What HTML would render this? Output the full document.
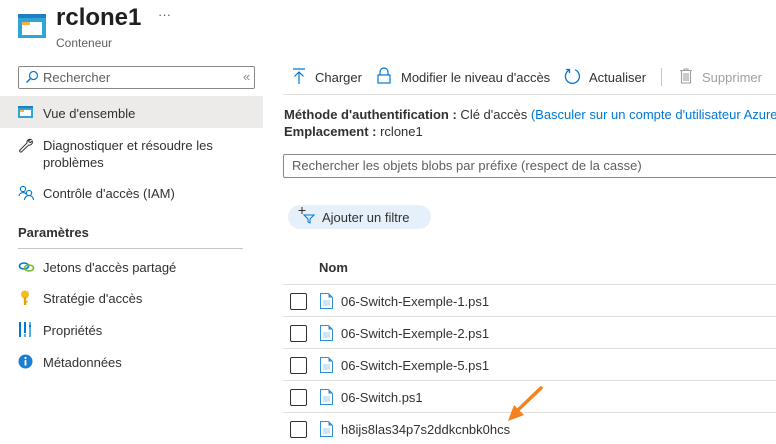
<!DOCTYPE html>
<html><head><meta charset="utf-8"><style>
*{margin:0;padding:0;box-sizing:border-box}
body{width:776px;height:444px;overflow:hidden;background:#fff;font-family:"Segoe UI","Liberation Sans",sans-serif;color:#323130;font-size:13px;position:relative}
.a{position:absolute;white-space:nowrap}
.nav{position:absolute;left:43px;font-size:13px}
.ic{position:absolute}
.row{position:absolute;left:283px;width:493px;height:32px;border-top:1px solid #e1dfdd}
.cb{position:absolute;left:7px;top:8px;width:17px;height:17px;border:1px solid #323130;border-radius:2px}
.fi{position:absolute;left:37px;top:8px}
.fn{position:absolute;left:58px;top:9px;font-size:13px}
</style></head><body>
<svg class="ic" style="left:18px;top:14px" width="28" height="24" viewBox="0 0 28 24"><rect x="0" y="0" width="28" height="24" fill="#2fa6d8"/><rect x="0" y="0" width="28" height="4" fill="#1f7fc0"/><rect x="4" y="8" width="20" height="13" fill="#fff"/><rect x="4" y="8" width="8" height="3" fill="#f0b349"/></svg>
<div class="a" style="left:56px;top:4px;font-size:24px;font-weight:600;color:#201f1e">rclone1</div>
<div class="a" style="left:158px;top:7px;font-size:13px;color:#605e5c">···</div>
<div class="a" style="left:56px;top:36px;font-size:12px;color:#605e5c">Conteneur</div>
<div class="a" style="left:18px;top:66px;width:237px;height:23px;border:1px solid #8a8886;border-radius:2px"></div>
<svg class="ic" style="left:25px;top:70px" width="14" height="14" viewBox="0 0 14 14"><circle cx="8.5" cy="5.5" r="4" fill="none" stroke="#0078d4" stroke-width="1.2"/><path d="M5.5 8.5L1.5 12.5" stroke="#0078d4" stroke-width="1.4"/></svg>
<div class="a" style="left:43px;top:70px;color:#605e5c">Rechercher</div>
<div class="a" style="left:243px;top:69px;color:#8a8886;font-size:13px">«</div>
<div class="a" style="left:0;top:96px;width:263px;height:32px;background:#edebe9"></div>
<svg class="ic" style="left:18px;top:106px" width="15" height="12" viewBox="0 0 15 12"><rect width="15" height="12" fill="#2fa6d8"/><rect width="15" height="2" fill="#1f7fc0"/><rect x="2" y="4" width="11" height="6" fill="#fff"/><rect x="2" y="4" width="4" height="2" fill="#f0b349"/></svg>
<div class="nav" style="top:106px">Vue d'ensemble</div>
<svg class="ic" style="left:18px;top:137px" width="15" height="16" viewBox="0 0 15 16"><path d="M13 2.5a3 3 0 0 0-4 3.5L2 13a1.2 1.2 0 0 0 1.7 1.7L10.7 8a3 3 0 0 0 3.5-4L12.5 5.5 11 5 10.5 3.5z" fill="none" stroke="#323130" stroke-width="1"/></svg>
<div class="nav" style="top:137px;line-height:17px">Diagnostiquer et résoudre les<br>problèmes</div>
<svg class="ic" style="left:18px;top:185px" width="16" height="15" viewBox="0 0 16 15"><circle cx="5" cy="4" r="2.6" fill="none" stroke="#0078d4" stroke-width="1.1"/><path d="M1 11a4 4 0 0 1 7-2" fill="none" stroke="#0078d4" stroke-width="1.1"/><circle cx="11" cy="8" r="2.6" fill="none" stroke="#0078d4" stroke-width="1.1"/><path d="M6.5 15a4.5 4.5 0 0 1 9 0" fill="none" stroke="#0078d4" stroke-width="1.1"/></svg>
<div class="nav" style="top:186px">Contrôle d'accès (IAM)</div>
<div class="a" style="left:18px;top:225px;font-size:13px;font-weight:600;color:#323130">Paramètres</div>
<div class="a" style="left:18px;top:248px;width:225px;height:1px;background:#c8c6c4"></div>
<svg class="ic" style="left:18px;top:262px" width="17" height="10" viewBox="0 0 17 10"><ellipse cx="6" cy="4" rx="4.5" ry="3" fill="none" stroke="#0078d4" stroke-width="1.6"/><ellipse cx="11" cy="6" rx="4.5" ry="3" fill="none" stroke="#7ab534" stroke-width="1.6"/></svg>
<div class="nav" style="top:260px">Jetons d'accès partagé</div>
<svg class="ic" style="left:20px;top:290px" width="10" height="16" viewBox="0 0 10 16"><circle cx="5" cy="4.5" r="4" fill="#f4bc1c"/><rect x="3.8" y="7" width="2.4" height="8" fill="#e8a300"/><rect x="5" y="11" width="2.5" height="1.5" fill="#e8a300"/></svg>
<div class="nav" style="top:291px">Stratégie d'accès</div>
<svg class="ic" style="left:18px;top:322px" width="15" height="15" viewBox="0 0 15 15"><rect x="1" y="0" width="2" height="15" fill="#0078d4"/><rect x="6" y="0" width="2" height="11" fill="#0078d4"/><rect x="6" y="12" width="2" height="3" fill="#50b0f0"/><rect x="11" y="0" width="2" height="15" fill="#50b0f0"/><rect x="11" y="3" width="2" height="2" fill="#0078d4"/></svg>
<div class="nav" style="top:323px">Propriétés</div>
<svg class="ic" style="left:18px;top:354px" width="15" height="15" viewBox="0 0 15 15"><circle cx="7.5" cy="7.5" r="7" fill="#1a7fd0"/><rect x="6.6" y="6" width="1.8" height="5.5" fill="#fff"/><circle cx="7.5" cy="4" r="1.1" fill="#fff"/></svg>
<div class="nav" style="top:355px">Métadonnées</div>

<svg class="ic" style="left:292px;top:68px" width="14" height="17" viewBox="0 0 14 17"><path d="M1 1h12M7 4v12M2.5 8.5L7 4l4.5 4.5" fill="none" stroke="#0078d4" stroke-width="1.2"/></svg>
<div class="a" style="left:315px;top:70px">Charger</div>
<svg class="ic" style="left:377px;top:67px" width="14" height="17" viewBox="0 0 14 17"><path d="M3 8V5a4 4 0 0 1 8 0v3" fill="none" stroke="#0078d4" stroke-width="1.2"/><rect x="1" y="8" width="12" height="8" fill="none" stroke="#0078d4" stroke-width="1.2"/></svg>
<div class="a" style="left:401px;top:70px">Modifier le niveau d'accès</div>
<svg class="ic" style="left:564px;top:68px" width="17" height="17" viewBox="0 0 17 17"><path d="M5 2.2A7 7 0 1 0 11 1.8" fill="none" stroke="#0078d4" stroke-width="1.3"/><path d="M2 1.5h3.5v3.5" fill="none" stroke="#0078d4" stroke-width="1.3"/></svg>
<div class="a" style="left:589px;top:70px">Actualiser</div>
<div class="a" style="left:661px;top:68px;width:1px;height:18px;background:#c8c6c4"></div>
<svg class="ic" style="left:679px;top:68px" width="14" height="16" viewBox="0 0 14 16"><path d="M1 2.5h12M5 2.5V1h4v1.5M2.5 2.5V15h9V2.5M5 5v8M7 5v8M9 5v8" fill="none" stroke="#a19f9d" stroke-width="1.1"/></svg>
<div class="a" style="left:702px;top:70px;color:#a19f9d">Supprimer</div>
<div class="a" style="left:283px;top:94px;width:493px;height:1px;background:#e1dfdd"></div>
<div class="a" style="left:284px;top:107px"><b style="font-weight:600">Méthode d'authentification :</b> Clé d'accès <span style="color:#0078d4">(Basculer sur un compte d'utilisateur Azure</span></div>
<div class="a" style="left:284px;top:124px"><b style="font-weight:600">Emplacement :</b> rclone1</div>
<div class="a" style="left:283px;top:154px;width:500px;height:24px;border:1px solid #8a8886;border-radius:2px"></div>
<div class="a" style="left:292px;top:158px;color:#605e5c">Rechercher les objets blobs par préfixe (respect de la casse)</div>
<div class="a" style="left:288px;top:205px;width:143px;height:24px;background:#e6f0fb;border-radius:12px"></div>
<svg class="ic" style="left:298px;top:206px" width="18" height="18" viewBox="0 0 18 18"><path d="M4 1v7M0.5 4.5h7" stroke="#323130" stroke-width="1"/><path d="M6 9h10l-4 4v4l-2-1v-3z" fill="none" stroke="#0078d4" stroke-width="1"/></svg>
<div class="a" style="left:322px;top:210px">Ajouter un filtre</div>
<div class="a" style="left:319px;top:260px;font-weight:600">Nom</div>

<div class="row" style="top:284px"><div class="cb"></div><svg class="fi" width="13" height="16" viewBox="0 0 13 16"><path d="M.5.5h8l4 4v11H.5z" fill="#fff" stroke="#2f8fd8"/><path d="M8.5.5v4h4z" fill="#2f8fd8"/><path d="M3 8h7M3 10h7M3 12h7" stroke="#9ccbf0"/></svg><div class="fn">06-Switch-Exemple-1.ps1</div></div>
<div class="row" style="top:316px"><div class="cb"></div><svg class="fi" width="13" height="16" viewBox="0 0 13 16"><path d="M.5.5h8l4 4v11H.5z" fill="#fff" stroke="#2f8fd8"/><path d="M8.5.5v4h4z" fill="#2f8fd8"/><path d="M3 8h7M3 10h7M3 12h7" stroke="#9ccbf0"/></svg><div class="fn">06-Switch-Exemple-2.ps1</div></div>
<div class="row" style="top:348px"><div class="cb"></div><svg class="fi" width="13" height="16" viewBox="0 0 13 16"><path d="M.5.5h8l4 4v11H.5z" fill="#fff" stroke="#2f8fd8"/><path d="M8.5.5v4h4z" fill="#2f8fd8"/><path d="M3 8h7M3 10h7M3 12h7" stroke="#9ccbf0"/></svg><div class="fn">06-Switch-Exemple-5.ps1</div></div>
<div class="row" style="top:380px"><div class="cb"></div><svg class="fi" width="13" height="16" viewBox="0 0 13 16"><path d="M.5.5h8l4 4v11H.5z" fill="#fff" stroke="#2f8fd8"/><path d="M8.5.5v4h4z" fill="#2f8fd8"/><path d="M3 8h7M3 10h7M3 12h7" stroke="#9ccbf0"/></svg><div class="fn">06-Switch.ps1</div></div>
<div class="row" style="top:412px"><div class="cb"></div><svg class="fi" width="13" height="16" viewBox="0 0 13 16"><path d="M.5.5h8l4 4v11H.5z" fill="#fff" stroke="#2f8fd8"/><path d="M8.5.5v4h4z" fill="#2f8fd8"/><path d="M3 8h7M3 10h7M3 12h7" stroke="#9ccbf0"/></svg><div class="fn">h8ijs8las34p7s2ddkcnbk0hcs</div></div>
<svg class="ic" style="left:500px;top:384px" width="46" height="42" viewBox="0 0 46 42"><path d="M41 4L18 26" stroke="#f58220" stroke-width="3.5" stroke-linecap="round"/><path d="M8 37L24 31 14 21z" fill="#f58220"/></svg>
</body></html>
